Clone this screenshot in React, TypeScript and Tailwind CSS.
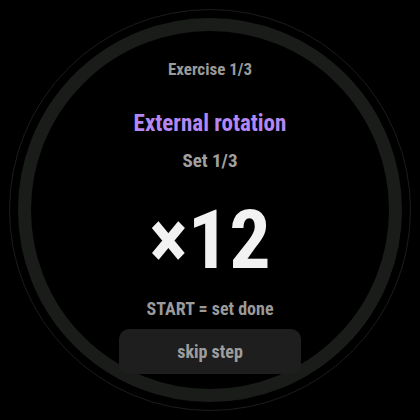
export default function App() {
  const font = { fontFamily: '"Roboto Condensed", Roboto, "Liberation Sans", sans-serif' };
  return (
    <div className="flex h-[420px] w-[420px] items-center justify-center bg-black" style={font}>
      <div className="flex h-[402px] w-[402px] items-center justify-center rounded-full border border-[#1c1c1c]">
        <div className="flex h-[384px] w-[384px] flex-col items-center rounded-full border-[13px] border-[#1a1c1a] pt-[28px]">
          <div className="text-[17px] font-bold leading-[20px] text-[#9a9a9a]">Exercise 1/3</div>
          <div className="mt-[31px] text-[23px] font-bold leading-[28px] text-[#b388f5]">External rotation</div>
          <div className="mt-[12px] text-[19px] font-bold leading-[22px] text-[#a0a0a0]">Set 1/3</div>
          <div className="mt-[22px] text-[82px] font-bold leading-[92px] text-[#f2f2f2]">×12</div>
          <div className="mt-[12px] text-[18px] font-bold leading-[22px] text-[#9a9a9a]">START = set done</div>
          <button className="mt-[9px] flex h-[45px] w-[182px] items-center justify-center rounded-[10px] bg-[#1e1e1e] text-[18px] font-bold text-[#9e9e9e]">
            skip step
          </button>
        </div>
      </div>
    </div>
  );
}
